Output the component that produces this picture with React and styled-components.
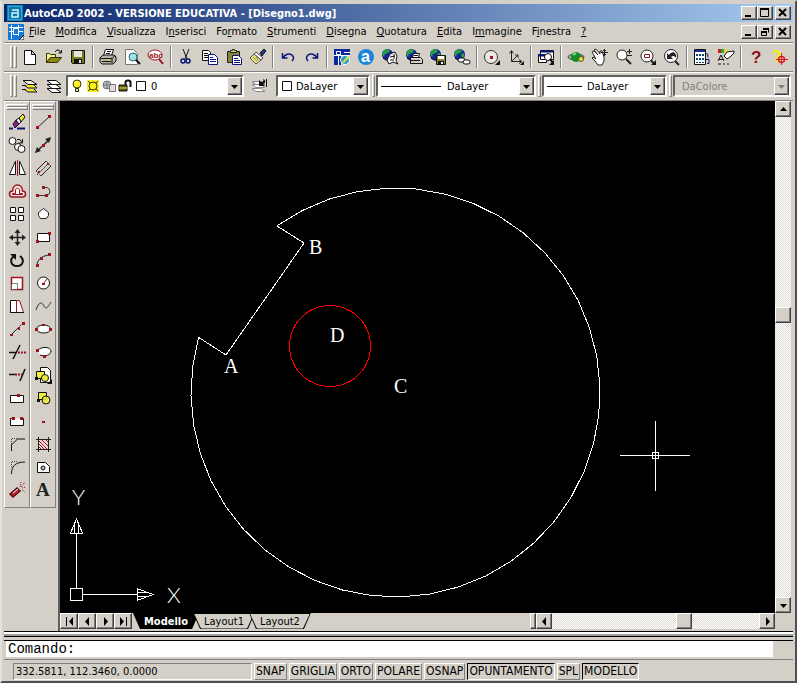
import { useState } from 'react';
import styled, { createGlobalStyle, css } from 'styled-components';

const NAVY = '#0a1478';
const MAROON = '#9c1420';

const globe = (
  <>
    <circle cx="6.5" cy="6.5" r="5.5" fill="#1226a0" />
    <path d="M3 2l4-1 2 2-2 2-3 1-1 3-2-3zM8 6l3-1v4l-2 1z" fill="#28a03c" />
    <path d="M2 10l3 2h3" stroke="#000" fill="none" />
  </>
);

const lens = (
  <>
    <circle cx="7" cy="7" r="5" fill="#fff" stroke="#222" />
    <path d="M11 11l5 5" stroke="#222" strokeWidth="2" />
  </>
);

const icons = {
  new: <path d="M3.500 2.500h7l4 4v10h-11zM10.500 2.500v4h4" fill="#fff" stroke="#111" />,
  open: (
    <>
      <path d="M1.500 14.500v-9h3l1 1h5v3h-5z" fill="#f4f08c" stroke="#333300" />
      <path d="M1.500 14.500l4-5h11l-4 5z" fill="#8a8a14" stroke="#333300" />
      <path d="M10 4l2-2h2l2 3M16.500 2v3h-3" fill="none" stroke="#111" />
    </>
  ),
  save: (
    <>
      <path d="M2.500 2.500h13v13h-12l-1-1z" fill="#7c7c16" stroke="#111" />
      <path d="M5 3h8v6H5z" fill="#e6e4dc" />
      <path d="M5 11h8v5H5z" fill="#111" />
      <path d="M10 12h2v3h-2z" fill="#e6e4dc" />
    </>
  ),
  print: (
    <>
      <path d="M6.500 1.500h8l-2 6h-8z" fill="#fff" stroke="#111" />
      <path d="M8 3.500h4M7 5.500h4" stroke="#111" />
      <path d="M4 7h11l2 2v4l-3 3H3l-2-2v-4z" fill="#b8b4a8" stroke="#111" />
      <path d="M1 10.500h12l3-3M3 13.500h9M13 10v5" stroke="#111" fill="none" />
      <path d="M8 12h3" stroke="#d8d020" />
    </>
  ),
  preview: (
    <>
      <path d="M2.500 1.500h8l4 4v11h-12z" fill="#fff" stroke="#777" />
      <circle cx="10" cy="9" r="4" fill="#a4e0e8" stroke="#246878" />
      <path d="M13 12l4 4" stroke="#111" strokeWidth="2" />
    </>
  ),
  spell: (
    <>
      <ellipse cx="8" cy="7" rx="7" ry="5" fill="#fff" stroke={MAROON} />
      <text x="2" y="10" fontSize="8" fontWeight="bold" fill={MAROON}>abc</text>
      <path d="M12 11l4 5" stroke={MAROON} strokeWidth="2" />
    </>
  ),
  cut: (
    <>
      <path d="M6 1l4 10M12 1L8 11" stroke="#111" fill="none" />
      <circle cx="6" cy="13" r="2" fill="none" stroke={NAVY} strokeWidth="1.500" />
      <circle cx="11" cy="13" r="2" fill="none" stroke={NAVY} strokeWidth="1.500" />
    </>
  ),
  copy: (
    <>
      <path d="M1.500 2.500h6l2 2v8h-8z" fill="#fff" stroke="#111" />
      <path d="M3 5.500h4M3 7.500h4M3 9.500h4" stroke="#111" />
      <path d="M7.500 6.500h6l3 3v7h-9z" fill="#fff" stroke={NAVY} />
      <path d="M9 9.500h3M9 11.500h6M9 13.500h6" stroke={NAVY} />
    </>
  ),
  paste: (
    <>
      <path d="M2.500 3.500h12v11h-12z" fill="#86843c" stroke="#222" />
      <path d="M5.500 4.500v-2h2v-1h2v1h2v2z" fill="#e4dc50" stroke="#222" />
      <path d="M7.500 7.500h6l3 3v6h-9z" fill="#fff" stroke={NAVY} />
      <path d="M9 10.500h4M9 12.500h6M9 14.500h6" stroke={NAVY} />
    </>
  ),
  brush: (
    <>
      <path d="M11 5l4-4 2 2-4 5z" fill="#28388c" stroke="#111" />
      <path d="M7 4l7 6-2 2-7-6z" fill="#fff" stroke="#444" />
      <path d="M5 6l7 6-5 4-6-6z" fill="#ece46c" stroke="#555" />
      <path d="M4 9l4 4M7 9l2 3" stroke="#888" />
    </>
  ),
  undo: <path d="M3.500 5v5h5M4 10c2-4 6-5 9-3 2 2 2 4 0 6" fill="none" stroke={NAVY} strokeWidth="1.500" />,
  redo: <path d="M14.500 5v5h-5M14 10c-2-4-6-5-9-3-2 2-2 4 0 6" fill="none" stroke={NAVY} strokeWidth="1.500" />,
  today: (
    <>
      <path d="M1 1h16v6H1zM1 7h7v10H1z" fill="#0a28a0" />
      <path d="M1 7.500h16M5.500 7v10M11 4.500h6" stroke="#fff" fill="none" />
      <path d="M3.500 3.500h4v3h-4z" fill="#0a28a0" stroke="#fff" />
      <circle cx="12" cy="12" r="4.500" fill="#1ca0c8" stroke="#fff" />
      <path d="M9 14l6-6 1 2-5 5z" fill="#ece040" />
    </>
  ),
  point: (
    <>
      <circle cx="9" cy="9" r="8" fill="#1c84dc" />
      <text x="4" y="14" fontSize="16" fontWeight="bold" fill="#fff">a</text>
    </>
  ),
  meet: (
    <>
      {globe}
      <path d="M9 6l5-2 2 4-1 5 2 3-5-2-4 2-2-4z" fill="#fff" stroke="#111" />
      <path d="M9 9l5-1M9 12h4M13 6v5" stroke="#111" />
    </>
  ),
  publish: (
    <>
      {globe}
      <path d="M8.500 5.500h6l-1 4h-6z" fill="#fff" stroke="#111" />
      <path d="M5.500 9.500h10l2 2v4h-12z" fill="#d4d0c8" stroke="#111" />
      <path d="M6 12.500h9M9 7.500h4" stroke="#111" />
    </>
  ),
  etransmit: (
    <>
      {globe}
      <path d="M7.500 7.500h9v9h-9z" fill="#8c8428" stroke="#111" />
      <path d="M9 8h6v3H9z" fill="#fff" />
      <path d="M9 13h6v4H9z" fill="#111" />
      <path d="M12 14h2v2h-2z" fill="#fff" />
    </>
  ),
  link: (
    <>
      {globe}
      <rect x="5" y="10" width="7" height="4" rx="2" fill="#fff" stroke="#111" />
      <rect x="10" y="12" width="7" height="4" rx="2" fill="#fff" stroke="#111" />
    </>
  ),
  snapTrack: (
    <>
      <circle cx="8" cy="9" r="6.500" fill="#eceae6" stroke="#333" />
      <path d="M7 8h3v3H7z" fill={MAROON} />
      <path d="M17 12v5h-5z" fill="#111" />
    </>
  ),
  ucs: (
    <>
      <path d="M4.500 3v10.500H14M5 13l6-6M2.500 5.500l2-3 2 3M8 7h3v3M12 11.500l3 2-3 2" fill="none" stroke="#222" />
      <path d="M17 13v4h-4z" fill="#111" />
    </>
  ),
  namedViews: (
    <>
      <path d="M3.500 2.500h13v9h-13zM1.500 6.500h8v8h-8z" fill="#fff" stroke="#111" />
      <path d="M3 3.500h13M1 7.500h8" stroke={NAVY} strokeWidth="2" />
      <circle cx="11" cy="9" r="3.500" fill="#fff" stroke="#111" />
      <path d="M13 11l3 4" stroke="#111" strokeWidth="2" />
      <path d="M17 12v5h-5z" fill="#111" />
    </>
  ),
  orbit: (
    <>
      <ellipse cx="9" cy="9" rx="8" ry="3" fill="#96b494" stroke="#444" />
      <circle cx="9" cy="9" r="5" fill="#128c28" />
      <path d="M6 7l3-2" stroke="#8ce08c" strokeWidth="2" />
      <circle cx="14" cy="11" r="2.500" fill="#f0e01c" stroke="#554" />
    </>
  ),
  pan: (
    <>
      <path d="M1 4l2-1 4 4-4-5 2-1 4 5 0-3 2 0 2 6 0 4-2 4H7l-3-4-3-3 1-1 3 2z" fill="#fff" stroke="#222" />
      <path d="M13.500 1v7M10 4.500h7M12 2.500h3M12 6.500h3" stroke="#222" />
    </>
  ),
  zoomRt: (
    <>
      {lens}
      <path d="M14.500 1v5M12 3.500h5M12 7.500h5" stroke="#222" fill="none" />
    </>
  ),
  zoomWin: (
    <>
      <circle cx="8" cy="8" r="6" fill="#fff" stroke="#222" />
      <path d="M12 12l3 4" stroke="#222" strokeWidth="2" />
      <path d="M5.500 6.500h5v3h-5z" fill="none" stroke={MAROON} />
      <path d="M17 12v5h-5z" fill="#111" />
    </>
  ),
  zoomPrev: (
    <>
      <circle cx="8" cy="8" r="6.500" fill="#fff" stroke="#222" />
      <path d="M12 13l4 4" stroke="#222" strokeWidth="2" />
      <path d="M4 5v6h6L8 9c2-2 4-1 5 1 1-6-4-8-7-3z" fill="#222" />
    </>
  ),
  designCenter: (
    <>
      <path d="M1.500 1.500h11v15h-11z" fill="#fff" stroke="#111" />
      <path d="M2 3h10" stroke="#1c2c94" strokeWidth="2" />
      <path d="M3 6h2v2H3zM6 6h2v2H6zM9 6h2v2H9zM3 10h2v2H3zM6 10h2v2H6zM9 10h2v2H9zM3 14h2v1H3zM6 14h2v1H6zM9 14h2v1H9z" fill="#0c4878" />
      <path d="M13 5.500l2 1v3M13 11.500h3v4h-2" fill="none" stroke={NAVY} />
    </>
  ),
  properties: (
    <>
      <path d="M1 1h3v4H1z" fill="#d01c1c" />
      <path d="M4 1h3v4H4z" fill="#28a83c" />
      <path d="M7 1h3v4H7z" fill="#e8d820" />
      <path d="M7 8l3-4 7-1v2l-4 4-3 2z" fill="#fff" stroke="#111" />
      <path d="M1 13l3-6 3 6M2 11.500h4M1 16h3M6 16h2M10 16h2" fill="none" stroke="#111" />
    </>
  ),
  help: <text x="4" y="15" fontSize="17" fontWeight="bold" fill="#8c1018">?</text>,
  assist: (
    <>
      <text x="1" y="14" fontSize="16" fontWeight="bold" fill="#f4ec10">?</text>
      <path d="M10.500 5v12M5 11.500h12" stroke="#d81c1c" />
      <circle cx="10.500" cy="11.500" r="3" fill="none" stroke="#d81c1c" strokeWidth="1.500" />
    </>
  ),
  layerCurrent: (
    <>
      <path d="M3 12l4 3h9l-3-3M3 8l4 3h9l-3-3" fill="#f0e430" stroke="#111" />
      <path d="M2 3.500h8l6 4H7z" fill="#f4f2ee" stroke="#111" />
      <path d="M1 8.500h4M1 12.500h4" stroke="#111" />
    </>
  ),
  layers: (
    <>
      <path d="M2 11.500h9l5 4H7z" fill="#fff" stroke="#111" />
      <path d="M2 7.500h9l5 4H7z" fill="#fff" stroke="#111" />
      <path d="M2 3.500h9l5 4H7z" fill="#fff" stroke="#111" />
    </>
  ),
  layerPrev: (
    <>
      <path d="M1 11.500h9l4 3H5z" fill="#fff" stroke="#888" />
      <path d="M1 7.500h9l4 3H5z" fill="#fff" stroke="#888" />
      <path d="M1 4.500h9l4 3H5z" fill="#fff" stroke="#888" />
      <path d="M8 3v6h6l-2-2c3-1 3-4 0-5 1 2 0 3-2 3z" fill="#111" />
      <path d="M15.500 2v8" stroke="#111" />
    </>
  ),
  erase: (
    <>
      <path d="M11 5l4-4 2 3-4 5z" fill="#f0e838" stroke="#111" />
      <path d="M8 7l3-2 2 4-3 3z" fill="#fff" stroke="#111" />
      <path d="M5 11l3-4 3 4-4 4z" fill="#8c1c94" stroke="#111" />
      <path d="M1 15.500h4M9 15.500h8" stroke={NAVY} strokeWidth="2" />
    </>
  ),
  copyObj: (
    <>
      <circle cx="4.500" cy="5" r="3.500" fill="#fff" stroke="#111" />
      <circle cx="10" cy="11" r="3.500" fill="#fff" stroke="#111" />
      <circle cx="13.500" cy="13" r="3.500" fill="#fff" stroke="#111" />
      <path d="M9 3.500h3l2 3M14.500 3v4h-4" fill="none" stroke="#111" />
    </>
  ),
  mirror: (
    <>
      <path d="M7.500 2v13.500h-6zM11.500 2v13.500h6z" fill="#fff" stroke="#111" />
      <path d="M9.500 1v16" stroke={MAROON} />
    </>
  ),
  offset: (
    <>
      <path d="M1.500 12c0-2 1-3 3-3 0-8 10-8 10 0 2 0 3 1 3 3s-1 3-3 3h-10c-2 0-3-1-3-3z" fill="#f0dcdc" stroke={MAROON} strokeWidth="1.500" />
      <path d="M4.500 12.500v-1h3V8c0-2 4-2 4 0v3.500h3v1z" fill="#fff" stroke={MAROON} />
    </>
  ),
  array: <path d="M2.500 2.500h5v5h-5zM10.500 2.500h5v5h-5zM2.500 10.500h5v5h-5zM10.500 10.500h5v5h-5z" fill="#fff" stroke="#111" />,
  move: (
    <>
      <path d="M9.500 3v13M3 9.500h13" stroke="#222" strokeWidth="1.500" />
      <path d="M6.500 5l3-4 3 4zM6.500 14l3 4 3-4zM5 6.500l-4 3 4 3zM14 6.500l4 3-4 3z" fill="#222" />
    </>
  ),
  rotate: (
    <>
      <path d="M6 5c-5 4-3 10 3 10s8-6 3-10" fill="none" stroke="#111" strokeWidth="2" />
      <path d="M2 3h6v6z" fill="#111" />
    </>
  ),
  scale: (
    <>
      <path d="M3.500 3.500h11v12h-11z" fill="#fff" stroke={MAROON} strokeWidth="1.500" />
      <path d="M3.500 9.500h6v6h-6z" fill="#fff" stroke="#111" strokeDasharray="1 1" />
    </>
  ),
  stretch: (
    <>
      <path d="M2.500 3.500h6v12h-6z" fill="#fff" stroke="#111" />
      <path d="M8.500 3.500h3l4 12h-7z" fill="#fff" stroke={MAROON} />
      <path d="M2 15.500h14" stroke="#111" />
    </>
  ),
  lengthen: (
    <>
      <path d="M3 15l7-7" stroke="#222" />
      <path d="M10 8l5-5" stroke="#222" strokeDasharray="2 1" />
      <path d="M2 14h3v2H2zM10 7h2v3h-2zM14 2h3v3h-3z" fill={MAROON} />
    </>
  ),
  trim: (
    <>
      <path d="M12 2L5 16M1 9.500h8" stroke="#111" strokeWidth="1.500" />
      <path d="M10 9.500h8" stroke={MAROON} strokeWidth="2" strokeDasharray="2 1" />
    </>
  ),
  extend: (
    <>
      <path d="M17 3l-5 12M1 8.500h6" stroke="#111" strokeWidth="1.500" />
      <path d="M7 8.500h7" stroke={MAROON} strokeWidth="2" strokeDasharray="2 1" />
    </>
  ),
  breakPt: (
    <>
      <path d="M2.500 6.500h13v7h-13z" fill="#fff" stroke="#111" />
      <path d="M9 5h3v3H9z" fill={MAROON} />
    </>
  ),
  breakTwo: (
    <>
      <path d="M5 6.500H2.500v7h13v-7H13" fill="#fff" stroke="#111" />
      <path d="M4 5h3v3H4zM12 5h3v3h-3z" fill={MAROON} />
    </>
  ),
  chamfer: (
    <>
      <path d="M3.500 16v-6l6-6H17" fill="none" stroke="#111" />
      <path d="M3.500 9V3.500H9" fill="none" stroke="#444" strokeDasharray="1 1" />
    </>
  ),
  fillet: (
    <>
      <path d="M3.500 16c0-8 4-12 13.500-12" fill="none" stroke="#111" />
      <path d="M3.500 9V3.500H9" fill="none" stroke="#444" strokeDasharray="1 1" />
    </>
  ),
  explode: (
    <>
      <path d="M2 13l7-6 3 3-7 6z" fill="#cc1c28" stroke="#561014" strokeWidth="1.500" />
      <path d="M5 12l5-4" stroke="#fff" />
      <path d="M12 6l1-5M13 6l4-5M14 7l4-1M14 9l3 2" stroke={MAROON} strokeDasharray="1 1" />
    </>
  ),
  line: (
    <>
      <path d="M4 14L15 4" stroke="#222" />
      <path d="M2 13h3v3H2zM14 2h3v3h-3z" fill={MAROON} />
    </>
  ),
  xline: (
    <>
      <path d="M2 16L16 3" stroke="#222" strokeWidth="1.500" />
      <path d="M1 17l2-6 4 4zM17 1l-6 2 4 4z" fill="#222" />
      <path d="M8 8h3v3H8z" fill={MAROON} />
    </>
  ),
  mline: (
    <>
      <path d="M2 12L12 2M7 17L17 7" stroke="#222" />
      <path d="M3 16L16 3" stroke="#222" strokeDasharray="2 1" />
      <path d="M2 12l5 5M12 2l5 5" stroke="#222" strokeDasharray="1 1" />
      <path d="M4 12h2v2H4zM13 4h2v2h-2z" fill={MAROON} />
    </>
  ),
  pline: (
    <>
      <path d="M3 13.500h9c5 0 5-8 0-8H9" fill="none" stroke="#333" />
      <path d="M2 12h3v3H2zM11 12h3v3h-3zM8 4h3v3H8z" fill={MAROON} />
    </>
  ),
  polygon: <path d="M9.500 3.500l5 4v3l-2 3h-6l-2-3v-3z" fill="#fff" stroke="#222" />,
  rect: (
    <>
      <path d="M3.500 5.500h12v8h-12z" fill="#fff" stroke="#111" />
      <path d="M2 12h3v3H2zM14 4h3v3h-3z" fill={MAROON} />
    </>
  ),
  arc: (
    <>
      <path d="M3 15c0-6 4-10 12-11" fill="none" stroke="#222" />
      <path d="M2 13h3v3H2zM6 6h3v3H6zM14 2h3v3h-3z" fill={MAROON} />
    </>
  ),
  circle: (
    <>
      <circle cx="9.500" cy="9" r="6" fill="#fff" stroke="#111" />
      <path d="M9 10l4-5" stroke={MAROON} />
      <path d="M8 9h3v2H8z" fill={MAROON} />
    </>
  ),
  spline: <path d="M2 13c3-9 6-8 8-4s4 1 7-4" fill="none" stroke="#333" />,
  ellipse: (
    <>
      <ellipse cx="9.500" cy="9" rx="7" ry="4" fill="#fff" stroke="#111" />
      <path d="M1 8h3v3H1zM15 8h3v3h-3zM8 4h3v2H8z" fill={MAROON} />
    </>
  ),
  ellipseArc: (
    <>
      <path d="M4 7c4-4 13-3 13 1s-6 6-11 4" fill="#fff" stroke="#111" />
      <path d="M2 6h3v3H2zM9 12h3v3H9z" fill={MAROON} />
    </>
  ),
  insertBlock: (
    <>
      <path d="M6.500 1.500h7l3 3v12h-10z" fill="#fff" stroke="#111" />
      <path d="M2.500 5.500h8v7h-8z" fill="#f0ec3c" stroke="#111" />
      <circle cx="11" cy="12" r="3.500" fill="#f0ec3c" stroke="#111" />
      <path d="M1 11h3v3H1zM18 13v5h-5z" fill="#111" />
    </>
  ),
  makeBlock: (
    <>
      <path d="M4.500 3.500h8v7h-8z" fill="#f0ec3c" stroke="#111" />
      <circle cx="12" cy="11" r="4" fill="#f0ec3c" fillOpacity="0.8" stroke="#111" />
      <path d="M3 10h3v3H3z" fill="#111" />
    </>
  ),
  dot: <path d="M8 9h3v2H8z" fill={MAROON} />,
  hatch: (
    <>
      <path d="M4.500 4.500h9v9h-9z" fill="#f4dcdc" />
      <path d="M4 8l6 6M4 5l9 9M7 4l7 7M11 4l3 3M4 11l3 3" stroke={MAROON} />
      <path d="M4.500 2v15M14.500 2v15M2 4.500h15M2 14.500h15" stroke="#222" />
    </>
  ),
  region: (
    <>
      <path d="M3.500 4.500h8l4 4v6h-12z" fill="#fff" stroke="#111" />
      <circle cx="9" cy="10" r="2" fill="#bbb" stroke="#111" />
    </>
  ),
  mtext: <text x="2" y="15" fontFamily="'Liberation Serif', serif" fontSize="19" fontWeight="bold" fill="#222">A</text>,
  bulb: (
    <>
      <circle cx="9" cy="7" r="4" fill="#f8f020" stroke="#3c3c00" />
      <path d="M7.500 11.500h3v3h-3z" fill="#f8f020" stroke="#222" />
      <path d="M7 6l2-2" stroke="#fff" />
    </>
  ),
  sun: (
    <>
      <path d="M3 3h12v12H3z" fill="#f8f020" />
      <circle cx="9" cy="9" r="4" fill="#f8f020" stroke="#3c3c00" />
      <path d="M4 4l2 2M14 4l-2 2M4 14l2-2M14 14l-2-2" stroke="#3c3c00" />
    </>
  ),
  freeze: (
    <>
      <circle cx="7" cy="8" r="4" fill="#bbb" stroke="#777" />
      <path d="M9.500 7.500h6v7h-6z" fill="#ddd" stroke="#777" />
      <path d="M7 4v8M3 8h8" stroke="#777" />
    </>
  ),
  lock: (
    <>
      <path d="M3 8h8v6H3z" fill="#5a5a14" stroke="#111" />
      <path d="M3 11h8" stroke="#ece040" />
      <path d="M9.500 8V5c0-2 5-2 5 0v5" fill="none" stroke="#111" strokeWidth="2" />
    </>
  ),
  swatch: <path d="M4.500 4.500h9v9h-9z" fill="#fff" stroke="#111" />,
};

const standardTools = [
  [['new', 'Nuovo'], ['open', 'Apri'], ['save', 'Salva']],
  [['print', 'Stampa'], ['preview', 'Anteprima di stampa'], ['spell', 'Trova e sostituisci']],
  [['cut', 'Taglia'], ['copy', 'Copia'], ['paste', 'Incolla'], ['brush', 'Corrispondenza proprietà']],
  [['undo', 'Annulla'], ['redo', 'Ripeti']],
  [['today', 'Today'], ['point', 'Point A'], ['meet', 'Meet Now'], ['publish', 'Pubblica'], ['etransmit', 'eTransmit'], ['link', 'Collegamento']],
  [['snapTrack', 'Puntamento'], ['ucs', 'UCS']],
  [['namedViews', 'Viste']],
  [['orbit', 'Orbita 3D'], ['pan', 'Pan'], ['zoomRt', 'Zoom tempo reale'], ['zoomWin', 'Zoom finestra'], ['zoomPrev', 'Zoom precedente']],
  [['designCenter', 'DesignCenter'], ['properties', 'Proprietà']],
  [['help', 'Guida'], ['assist', 'Assistenza']],
];

const modifyTools = [
  ['erase', 'Cancella'], ['copyObj', 'Copia oggetto'], ['mirror', 'Specchio'], ['offset', 'Offset'],
  ['array', 'Serie'], ['move', 'Sposta'], ['rotate', 'Ruota'], ['scale', 'Scala'], ['stretch', 'Stira'],
  ['lengthen', 'Allunga'], ['trim', 'Taglia'], ['extend', 'Estendi'], ['breakPt', 'Spezza nel punto'],
  ['breakTwo', 'Spezza'], ['chamfer', 'Cima'], ['fillet', 'Raccordo'], ['explode', 'Esplodi'],
];

const drawTools = [
  ['line', 'Linea'], ['xline', 'Linea di costruzione'], ['mline', 'Multilinea'], ['pline', 'Polilinea'],
  ['polygon', 'Poligono'], ['rect', 'Rettangolo'], ['arc', 'Arco'], ['circle', 'Cerchio'], ['spline', 'Spline'],
  ['ellipse', 'Ellisse'], ['ellipseArc', 'Arco ellittico'], ['insertBlock', 'Inserisci blocco'],
  ['makeBlock', 'Crea blocco'], ['dot', 'Punto'], ['hatch', 'Tratteggio'], ['region', 'Regione'], ['mtext', 'Testo multilinea'],
];

// each entry is split around its accelerator letter
const menus = [
  ['', 'F', 'ile'], ['', 'M', 'odifica'], ['', 'V', 'isualizza'], ['I', 'n', 'serisci'], ['Fo', 'r', 'mato'],
  ['', 'S', 'trumenti'], ['', 'D', 'isegna'], ['', 'Q', 'uotatura'], ['', 'E', 'dita'], ['I', 'm', 'magine'],
  ['F', 'i', 'nestra'], ['', '?', ''],
];

const modes = ['SNAP', 'GRIGLIA', 'ORTO', 'POLARE', 'OSNAP', 'OPUNTAMENTO', 'SPL', 'MODELLO'];

function arcPoints(cx, cy, r, from, to, steps) {
  const pts = [];
  for (let i = 0; i <= steps; i++) {
    const a = ((from + ((to - from) * i) / steps) * Math.PI) / 180;
    pts.push(`${(cx + r * Math.cos(a)).toFixed(1)},${(cy + r * Math.sin(a)).toFixed(1)}`);
  }
  return pts.join(' ');
}

const Icon = ({ name }) => (
  <Glyph viewBox="0 0 18 18" aria-hidden="true">{icons[name]}</Glyph>
);

const Arrow = ({ dir }) => {
  const d = {
    up: 'M1 6h7L4.500 2z',
    down: 'M1 3h7L4.500 7z',
    left: 'M6 0v9L2 4.500z',
    right: 'M3 0v9l4-4.500z',
    first: 'M8 0v9L4 4.500zM1 0h1v9H1z',
    last: 'M1 0v9l4-4.500zM7 0h1v9H7z',
  }[dir];
  return <ArrowGlyph viewBox="0 0 9 9" aria-hidden="true"><path d={d} /></ArrowGlyph>;
};

const Combo = ({ label, value, width, grow, disabled, children }) => (
  <ComboBox $width={width} $grow={grow} $disabled={disabled}>
    {children}
    <ComboSelect aria-label={label} defaultValue={value} disabled={disabled}>
      <option>{value}</option>
    </ComboSelect>
    <ComboArrow $disabled={disabled}><Arrow dir="down" /></ComboArrow>
  </ComboBox>
);

const Caption = ({ restore }) => (
  <CaptionGroup>
    <CaptionButton aria-label="Riduci a icona">
      <svg width="12" height="10"><path d="M2 7h6v2H2z" /></svg>
    </CaptionButton>
    <CaptionButton aria-label={restore ? 'Ripristina' : 'Ingrandisci'}>
      {restore ? (
        <svg width="12" height="10">
          <path d="M4.500 1.500h5v4M2.500 4.500h5v4h-5z" fill="none" stroke="#000" />
          <path d="M4 1h6v2H4zM2 4h6v2H2z" />
        </svg>
      ) : (
        <svg width="12" height="10">
          <path d="M1.500 1.500h8v7h-8z" fill="none" stroke="#000" />
          <path d="M1 0h9v2H1z" />
        </svg>
      )}
    </CaptionButton>
    <CaptionButton $gap aria-label="Chiudi">
      <svg width="12" height="10"><path d="M2 1l7 7M9 1L2 8" stroke="#000" strokeWidth="2" /></svg>
    </CaptionButton>
  </CaptionGroup>
);

const Palette = ({ tools, label }) => (
  <PaletteColumn aria-label={label}>
    <TopGrip />
    {tools.map(([name, title]) => (
      <PaletteButton key={name} title={title} aria-label={title}><Icon name={name} /></PaletteButton>
    ))}
  </PaletteColumn>
);

const Drawing = () => (
  <DrawingSvg aria-label="Disegno1">
    <g fill="none" stroke="#fff" shapeRendering="crispEdges">
      <polyline points={arcPoints(335.5, 291.5, 204.5, -125.4, 195.6, 39)} />
      <polyline points="217,125 244,142 166,254 138,236" />
      <polygon points={arcPoints(270, 245, 40.5, 0, 352.5, 47)} stroke="#f00" />
      <path d="M595.500 320v70M560 354.500h70M592.500 351.500h6v6h-6z" />
      <path d="M10.500 487.500h12v12h-12zM16.500 487V432M23 493.500h54" />
      <path d="M16.500 418l-6 14h12zM14.500 423v9M18.500 423v9M93 493.500l-16-6v12zM77 491.500h11M77 495.500h11" />
    </g>
    <CadText x="249" y="153">B</CadText>
    <CadText x="164" y="272">A</CadText>
    <CadText x="270" y="241">D</CadText>
    <CadText x="334" y="292">C</CadText>
    <AxisText x="12" y="404">Y</AxisText>
    <AxisText x="107" y="502">X</AxisText>
  </DrawingSvg>
);

const App = () => {
  const [command, setCommand] = useState('');
  const [active, setActive] = useState(['OPUNTAMENTO', 'MODELLO']);

  const toggleMode = (mode) => {
    setActive((list) => (list.includes(mode) ? list.filter((m) => m !== mode) : [...list, mode]));
  };

  return (
    <>
      <GlobalStyle />
      <Window>
        <TitleBar>
          <AppLogo viewBox="0 0 16 16" aria-hidden="true">
            <path d="M0 0h16v16H0z" fill="#0c84b8" />
            <path d="M1.500 1.500h13v13h-13z" fill="#0878a8" stroke="#30a8d0" />
            <path d="M5 5h6v7H5V8h5" fill="none" stroke="#d8f4fc" strokeWidth="1.500" />
          </AppLogo>
          <Title>AutoCAD 2002 - VERSIONE EDUCATIVA - [Disegno1.dwg]</Title>
          <Caption />
        </TitleBar>
        <MenuBar>
          <AppLogo viewBox="0 0 16 16" aria-hidden="true">
            <path d="M0 0h16v16H0z" fill="#1478d8" />
            <path d="M3.500 1v14M1 7.500h14M10.500 1v11M1 3.500h14" stroke="#fff" fill="none" />
            <path d="M5.500 4.500h5v6h-5z" fill="#1478d8" stroke="#fff" />
            <path d="M16 11v5h-5z" fill="#fff" stroke="#111" />
          </AppLogo>
          {menus.map(([before, key, after]) => (
            <MenuItem key={before + key + after}>{before}<u>{key}</u>{after}</MenuItem>
          ))}
          <Caption restore />
        </MenuBar>
        <Toolbar>
          <Grip /><Grip />
          {standardTools.map((group) => (
            <ToolGroup key={group[0][0]}>
              {group.map(([name, title]) => (
                <ToolButton key={name} title={title} aria-label={title}><Icon name={name} /></ToolButton>
              ))}
            </ToolGroup>
          ))}
        </Toolbar>
        <Toolbar>
          <Grip /><Grip />
          <ToolGroup>
            <ToolButton aria-label="Rendi corrente il layer"><Icon name="layerCurrent" /></ToolButton>
            <ToolButton aria-label="Layer"><Icon name="layers" /></ToolButton>
          </ToolGroup>
          <Combo label="Layer corrente" value="0" width={178}>
            <LayerState>
              <Icon name="bulb" /><Icon name="sun" /><Icon name="freeze" /><Icon name="lock" /><Icon name="swatch" />
            </LayerState>
          </Combo>
          <ToolGroup>
            <ToolButton $wide aria-label="Layer precedente"><Icon name="layerPrev" /></ToolButton>
          </ToolGroup>
          <Combo label="Colore" value="DaLayer" width={94}><Icon name="swatch" /></Combo>
          <Grip />
          <Combo label="Tipo di linea" value="DaLayer" width={160}><LineSample $width={60} $gap={6} /></Combo>
          <Grip />
          <Combo label="Spessore linea" value="DaLayer" width={125}><LineSample $width={35} $gap={5} /></Combo>
          <Grip />
          <Combo label="Stile di stampa" value="DaColore" grow disabled><LineSample $width={0} $gap={4} /></Combo>
        </Toolbar>
        <Workspace>
          <Palette tools={modifyTools} label="Edita" />
          <Palette tools={drawTools} label="Disegna" />
          <Viewport>
            <ViewRow>
              <Drawing />
              <ScrollBar $vertical>
                <ScrollButton aria-label="Scorri su"><Arrow dir="up" /></ScrollButton>
                <Spacer $grow={190} />
                <Thumb />
                <Spacer $grow={274} />
                <ScrollButton aria-label="Scorri giù"><Arrow dir="down" /></ScrollButton>
              </ScrollBar>
            </ViewRow>
            <TabRow>
              {['first', 'left', 'right', 'last'].map((dir) => (
                <NavButton key={dir} aria-label={dir}><Arrow dir={dir} /></NavButton>
              ))}
              <Tabs>
                <Tab $active><span>Modello</span></Tab>
                <Tab><span>Layout1</span></Tab>
                <Tab><span>Layout2</span></Tab>
              </Tabs>
              <Splitter />
              <ScrollBar>
                <ScrollButton aria-label="Scorri a sinistra"><Arrow dir="left" /></ScrollButton>
                <Spacer $grow={124} />
                <Thumb />
                <Spacer $grow={67} />
                <ScrollButton aria-label="Scorri a destra"><Arrow dir="right" /></ScrollButton>
              </ScrollBar>
              <Corner />
            </TabRow>
          </Viewport>
        </Workspace>
        <Divider />
        <CommandLine>
          <label htmlFor="command">Comando:</label>
          <input id="command" value={command} onChange={(e) => setCommand(e.target.value)} />
        </CommandLine>
        <StatusBar>
          <Coordinates>332.5811, 112.3460, 0.0000</Coordinates>
          {modes.map((mode) => (
            <ModeButton key={mode} $on={active.includes(mode)} aria-pressed={active.includes(mode)} onClick={() => toggleMode(mode)}>
              {mode}
            </ModeButton>
          ))}
        </StatusBar>
      </Window>
    </>
  );
};

const GlobalStyle = createGlobalStyle`
  * {
    box-sizing: border-box;
  }

  body {
    margin: 0;
    background: #d4d0c8;
    color: #000;
    font-family: Tahoma, 'DejaVu Sans Condensed', 'DejaVu Sans', sans-serif;
    font-size: 11px;
  }

  button, input, select {
    font: inherit;
    color: inherit;
    margin: 0;
    padding: 0;
    border: 0;
    border-radius: 0;
    background: none;
  }
`;

const raised = css`
  background: #d4d0c8;
  border: 1px solid;
  border-color: #fff #404040 #404040 #fff;
  box-shadow: inset -1px -1px #808080;
`;

const Window = styled.div`
  display: flex;
  flex-direction: column;
  min-height: 100vh;
  padding: 2px 2px 1px;
  border: 2px solid;
  border-color: #d4d0c8 #505050 #505050 #e4e2dc;
  background: #d4d0c8;
`;

const TitleBar = styled.header`
  display: flex;
  align-items: center;
  height: 18px;
  padding: 0 2px 0 3px;
  background: linear-gradient(90deg, #0a246a, #a6caf0);
`;

const AppLogo = styled.svg`
  width: 16px;
  height: 16px;
  flex: none;
`;

const Title = styled.h1`
  flex: 1;
  margin: 0 0 0 1px;
  color: #fff;
  font-size: 11px;
  font-weight: bold;
  white-space: nowrap;
`;

const CaptionGroup = styled.div`
  display: flex;
  margin-left: auto;
`;

const CaptionButton = styled.button`
  ${raised}
  display: flex;
  align-items: center;
  justify-content: center;
  width: 16px;
  height: 14px;
  margin-left: ${(p) => (p.$gap ? 2 : 0)}px;

  svg {
    flex: none;
  }
`;

const MenuBar = styled.nav`
  display: flex;
  align-items: center;
  height: 20px;
  padding: 0 2px 0 4px;
`;

const MenuItem = styled.button`
  padding: 0 5px;
  line-height: 18px;
  white-space: nowrap;

  u {
    text-underline-offset: 1px;
  }
`;

const Toolbar = styled.div`
  display: flex;
  align-items: center;
  height: 29px;
  padding: 0 2px 0 4px;
  border-top: 1px solid #808080;
  box-shadow: inset 0 1px #fff;
`;

const Grip = styled.span`
  flex: none;
  width: 3px;
  height: 22px;
  margin: 0 1px 0 2px;
  border: 1px solid;
  border-color: #fff #808080 #808080 #fff;

  & + & {
    margin: 0 1px 0 0;
  }
`;

const ToolGroup = styled.div`
  display: flex;
  align-items: center;

  & + & {
    margin-left: 2px;
    padding-left: 3px;
    border-left: 1px solid #808080;
    box-shadow: inset 1px 0 #fff;
  }
`;

const ToolButton = styled.button`
  display: flex;
  align-items: center;
  justify-content: center;
  width: ${(p) => (p.$wide ? 32 : 24)}px;
  height: 22px;
`;

const Glyph = styled.svg`
  flex: none;
  width: 18px;
  height: 18px;
  overflow: visible;
  font-family: 'Liberation Sans', sans-serif;
`;

const ArrowGlyph = styled.svg`
  flex: none;
  width: 9px;
  height: 9px;
  fill: currentColor;
`;

const ComboBox = styled.div`
  display: flex;
  align-items: center;
  flex: ${(p) => (p.$grow ? '1 1 0' : `0 0 ${p.$width}px`)};
  height: 22px;
  border: 2px solid;
  border-color: #606060 #fff #fff #606060;
  background: ${(p) => (p.$disabled ? '#d4d0c8' : '#fff')};
  color: ${(p) => (p.$disabled ? '#808080' : '#000')};
`;

const ComboSelect = styled.select`
  flex: 1;
  min-width: 0;
  appearance: none;
  opacity: 1;
  outline: none;
`;

const ComboArrow = styled.span`
  ${raised}
  display: flex;
  align-items: center;
  justify-content: center;
  width: 15px;
  height: 18px;
  color: ${(p) => (p.$disabled ? '#808080' : '#000')};
`;

const LayerState = styled.span`
  display: flex;
  margin-right: 3px;

  svg {
    margin-right: -2px;
  }
`;

const LineSample = styled.span`
  flex: none;
  width: ${(p) => p.$width}px;
  margin: 0 ${(p) => p.$gap}px 0 3px;
  border-top: 1px solid #000;
`;

const Workspace = styled.div`
  display: flex;
  flex: 1;
  border-top: 1px solid #808080;
  padding: 0 2px 0 0;
`;

const PaletteColumn = styled.aside`
  display: flex;
  flex-direction: column;
  align-self: flex-start;
  align-items: center;
  flex: none;
  width: 26px;
  padding: 2px 0 6px;
  border: 1px solid;
  border-color: #fff #808080 #808080 #fff;
`;

const TopGrip = styled.span`
  width: 22px;
  height: 6px;
  border: 1px solid;
  border-color: #fff #808080 #808080 #fff;
  background: linear-gradient(#d4d0c8 1px, #808080 1px, #808080 2px, #fff 2px, #fff 3px, #d4d0c8 3px);
`;

const PaletteButton = styled.button`
  display: flex;
  align-items: center;
  justify-content: center;
  width: 24px;
  height: 23px;
`;

const Viewport = styled.main`
  display: flex;
  flex: 1;
  flex-direction: column;
  min-width: 0;
  margin-left: 2px;
  border-left: 2px solid #606060;
`;

const ViewRow = styled.div`
  display: flex;
  flex: 1;
  min-height: 0;
`;

const DrawingSvg = styled.svg`
  flex: 1;
  min-width: 0;
  height: 100%;
  min-height: 512px;
  background: #000;
`;

const CadText = styled.text`
  fill: #fff;
  font-family: 'Liberation Serif', serif;
  font-size: 20px;
`;

const AxisText = styled.text`
  fill: #fff;
  font-family: Lato, sans-serif;
  font-size: 22px;
  font-weight: 300;
`;

const ScrollBar = styled.div`
  display: flex;
  flex-direction: ${(p) => (p.$vertical ? 'column' : 'row')};
  flex: ${(p) => (p.$vertical ? 'none' : '0 1 239px')};
  background: repeating-conic-gradient(#fff 0 25%, #dedad4 0 50%) 0 0 / 2px 2px;
`;

const ScrollButton = styled.button`
  ${raised}
  display: flex;
  align-items: center;
  justify-content: center;
  flex: none;
  width: 16px;
  height: 16px;
`;

const Thumb = styled.span`
  ${raised}
  flex: none;
  width: 16px;
  height: 16px;
`;

const Spacer = styled.span`
  flex: ${(p) => p.$grow} 1 0;
`;

const TabRow = styled.div`
  display: flex;
  height: 16px;
  margin-bottom: 2px;
`;

const NavButton = styled.button`
  ${raised}
  display: flex;
  align-items: center;
  justify-content: center;
  width: 18px;
  height: 16px;
`;

const Tabs = styled.div`
  display: flex;
  flex: 1;
  padding-left: 1px;
`;

const Tab = styled.button`
  height: 16px;
  margin-right: -6px;
  padding: 0 1px;
  background: #000;
  clip-path: polygon(0 0, 100% 0, calc(100% - 7px) 100%, 7px 100%);

  span {
    display: block;
    padding: 0 10px;
    line-height: 15px;
    font-weight: ${(p) => (p.$active ? 'bold' : 'normal')};
    color: ${(p) => (p.$active ? '#fff' : '#000')};
    background: ${(p) => (p.$active ? '#000' : '#d4d0c8')};
    clip-path: polygon(0 0, 100% 0, calc(100% - 7px) 100%, 7px 100%);
  }
`;

const Splitter = styled.span`
  ${raised}
  width: 6px;
  height: 16px;
`;

const Corner = styled.span`
  width: 16px;
`;

const Divider = styled.div`
  height: 10px;
  border: solid #000;
  border-width: 1px 0;
  background: linear-gradient(#fff 2px, #9c9e94 2px, #9c9e94 4px, #000 4px, #000 5px, #d4d0c8 5px);
`;

const CommandLine = styled.div`
  display: flex;
  align-items: center;
  height: 16px;
  margin: 0 20px 0 2px;
  padding-left: 2px;
  background: #fff;
  font-family: 'Liberation Mono', monospace;
  font-size: 14px;

  input {
    flex: 1;
    min-width: 0;
    height: 16px;
    outline: none;
  }
`;

const StatusBar = styled.footer`
  display: flex;
  gap: 2px;
  margin-top: 2px;
  padding: 3px 0 0 9px;
  border-top: 1px solid #808080;
  font-size: 12px;
`;

const Coordinates = styled.output`
  width: 239px;
  height: 17px;
  padding: 0 2px;
  font-size: 11px;
  line-height: 15px;
  border: 1px solid;
  border-color: #808080 #fff #fff #808080;
`;

const ModeButton = styled.button`
  height: 17px;
  padding: 0 1px;
  line-height: 15px;
  border: 1px solid;
  border-color: ${(p) => (p.$on ? '#000 #fff #fff #000' : '#fff #808080 #808080 #fff')};
`;

export default App;
